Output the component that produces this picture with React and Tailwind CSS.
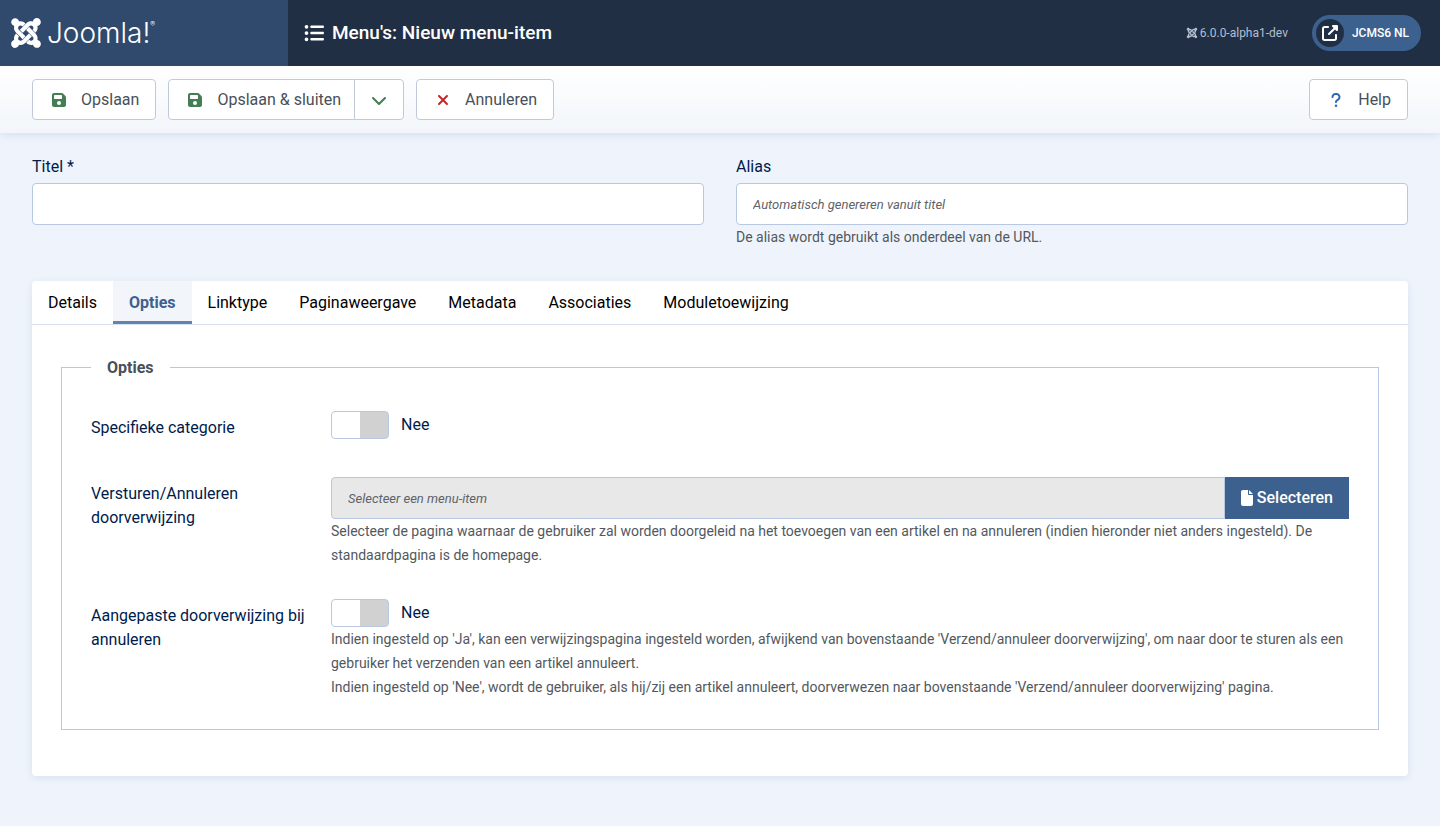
import React, { useState } from "react";
import {
  FaJoomla,
  FaListUl,
  FaFloppyDisk,
  FaXmark,
  FaChevronDown,
  FaQuestion,
  FaFile,
  FaUpRightFromSquare,
} from "react-icons/fa6";

const tabs = ["Details", "Opties", "Linktype", "Paginaweergave", "Metadata", "Associaties", "Moduletoewijzing"];

const buttonBase = "flex h-[41px] items-center border border-[#c1cad8] bg-white text-base text-[#495057]";

function ToolbarButton({ icon, label, className }) {
  return (
    <button type="button" className={`${buttonBase} ${className}`}>
      <span className="flex w-5 justify-center">{icon}</span>
      {label}
    </button>
  );
}

function Header() {
  return (
    <header className="relative z-10 flex h-[66px] bg-[#212f45] text-white">
      <a href="#" aria-label="Joomla!" className="flex w-72 shrink-0 items-center gap-1 bg-[#2f4a6d] pl-[9px]">
        <FaJoomla className="size-[34px]" />
        <span className="flex items-start font-['Inter',sans-serif] text-[28px] leading-8 font-light">
          Joomla!<span className="text-[7px] leading-4">®</span>
        </span>
      </a>
      <div className="flex flex-1 items-center pr-[19px] pl-4">
        <h1 className="flex items-center gap-2 text-[19px] font-medium">
          <FaListUl className="size-5" />
          Menu's: Nieuw menu-item
        </h1>
        <div className="ml-auto flex items-center gap-6">
          <div className="flex items-center gap-[2px] text-xs text-[#b4bfce]">
            <FaJoomla className="size-3" />
            6.0.0-alpha1-dev
          </div>
          <a href="#" className="flex h-9 items-center gap-2 rounded-full bg-[#3d618f] pr-3 pl-1 text-xs font-medium">
            <span className="flex size-7 items-center justify-center rounded-full bg-[#212f45]">
              <FaUpRightFromSquare className="size-4" />
            </span>
            JCMS6 NL
          </a>
        </div>
      </div>
    </header>
  );
}

function Toolbar() {
  return (
    <div className="flex gap-3 bg-linear-to-b from-white to-[#f2f6fa] px-8 py-[13px] shadow-[0_2px_8px_#d5dfee]">
      <ToolbarButton
        className="gap-3 rounded px-4"
        icon={<FaFloppyDisk className="size-4 text-[#457d54]" />}
        label="Opslaan"
      />
      <div className="flex">
        <ToolbarButton
          className="gap-3 rounded-l pr-[13px] pl-4"
          icon={<FaFloppyDisk className="size-4 text-[#457d54]" />}
          label="Opslaan & sluiten"
        />
        <button
          type="button"
          aria-label="Meer opties"
          className={`${buttonBase} -ml-px w-[50px] justify-center rounded-r`}
        >
          <FaChevronDown className="size-4 text-[#457d54]" />
        </button>
      </div>
      <ToolbarButton
        className="gap-3 rounded px-4"
        icon={<FaXmark className="size-4 text-[#c52827]" />}
        label="Annuleren"
      />
      <ToolbarButton
        className="ml-auto gap-3 rounded px-4"
        icon={<FaQuestion className="size-4 text-[#2a69b8]" />}
        label="Help"
      />
    </div>
  );
}

function Toggle({ id, describedBy }) {
  const [on, setOn] = useState(false);
  return (
    <div className="flex h-7 items-center gap-3 text-[#001b4c]">
      <input
        id={id}
        type="checkbox"
        role="switch"
        aria-describedby={describedBy}
        checked={on}
        onChange={(e) => setOn(e.target.checked)}
        className="h-7 w-[58px] appearance-none rounded border border-[#b9c8e2] bg-linear-to-r from-white from-50% to-[#d1d1d1] to-50% checked:from-[#457d54] checked:to-white"
      />
      <span>{on ? "Ja" : "Nee"}</span>
    </div>
  );
}

function Row({ id, label, children, className = "" }) {
  return (
    <div className={`flex ${className}`}>
      <label htmlFor={id} className="w-60 shrink-0 pt-[5px] pr-5 leading-6 text-[#001b4c]">
        {label}
      </label>
      <div className="min-w-0 flex-1">{children}</div>
    </div>
  );
}

const inputBase =
  "h-[42px] border border-[#b9c8e2] px-4 text-base text-[#22262a] placeholder-shown:text-[13px] placeholder:text-[#5f6368] placeholder:italic";

export default function App() {
  const [active, setActive] = useState("Opties");
  return (
    <div className="min-h-screen bg-[#eff4fc] pb-[50px] font-['Roboto',sans-serif] text-base">
      <Header />
      <Toolbar />
      <main className="px-8 pt-[22px]">
        <div className="grid grid-cols-2 gap-8">
          <div className="flex flex-col">
            <label htmlFor="titel" className="mb-1 leading-6 text-[#001b4c]">
              Titel *
            </label>
            <input id="titel" type="text" className={`${inputBase} rounded bg-white`} />
          </div>
          <div className="flex flex-col">
            <label htmlFor="alias" className="mb-1 leading-6 text-[#001b4c]">
              Alias
            </label>
            <input
              id="alias"
              type="text"
              placeholder="Automatisch genereren vanuit titel"
              aria-describedby="alias-desc"
              className={`${inputBase} rounded bg-white`}
            />
            <p id="alias-desc" className="text-sm leading-6 text-[#53585e]">
              De alias wordt gebruikt als onderdeel van de URL.
            </p>
          </div>
        </div>

        <div className="mt-8 rounded bg-white shadow-[0_2px_8px_#d8e1ef]">
          <div role="tablist" className="flex h-11 overflow-hidden rounded-t border-b border-[#d9e1ee]">
            {tabs.map((tab) => (
              <button
                key={tab}
                type="button"
                role="tab"
                aria-selected={tab === active}
                onClick={() => setActive(tab)}
                className={`px-4 ${
                  tab === active
                    ? "bg-[#f2f6fa] font-bold text-[#3d618f] shadow-[inset_0_-3px_0_#6482ab]"
                    : "text-black"
                }`}
              >
                {tab}
              </button>
            ))}
          </div>
          <div className="px-[29px] pt-[31px] pb-[46px]">
            <fieldset className="border border-[#b9c8e2] px-[29px] pt-8 pb-[30px]">
              <legend className="px-4 leading-[23px] font-bold text-[#495057]">Opties</legend>
              <Row id="categorie" label="Specifieke categorie" className="mb-[37px]">
                <Toggle id="categorie" />
              </Row>
              <Row id="redirect" label="Versturen/Annuleren doorverwijzing" className="mb-8">
                <div className="flex">
                  <input
                    id="redirect"
                    type="text"
                    readOnly
                    placeholder="Selecteer een menu-item"
                    aria-describedby="redirect-desc"
                    className={`${inputBase} min-w-0 flex-1 rounded-l bg-[#e8e8e8]`}
                  />
                  <button
                    type="button"
                    className="flex h-[42px] items-center gap-1 bg-[#3d618f] px-4 font-medium text-white"
                  >
                    <FaFile className="h-4 w-3" />
                    Selecteren
                  </button>
                </div>
                <p id="redirect-desc" className="text-sm leading-6 text-[#53585e]">
                  Selecteer de pagina waarnaar de gebruiker zal worden doorgeleid na het toevoegen van een artikel en na
                  annuleren (indien hieronder niet anders ingesteld). De standaardpagina is de homepage.
                </p>
              </Row>
              <Row id="annuleren" label="Aangepaste doorverwijzing bij annuleren">
                <Toggle id="annuleren" describedBy="annuleren-desc" />
                <p id="annuleren-desc" className="text-sm leading-6 text-[#53585e]">
                  Indien ingesteld op 'Ja', kan een verwijzingspagina ingesteld worden, afwijkend van bovenstaande
                  'Verzend/annuleer doorverwijzing', om naar door te sturen als een gebruiker het verzenden van een
                  artikel annuleert.
                  <br />
                  Indien ingesteld op 'Nee', wordt de gebruiker, als hij/zij een artikel annuleert, doorverwezen naar
                  bovenstaande 'Verzend/annuleer doorverwijzing' pagina.
                </p>
              </Row>
            </fieldset>
          </div>
        </div>
      </main>
    </div>
  );
}
